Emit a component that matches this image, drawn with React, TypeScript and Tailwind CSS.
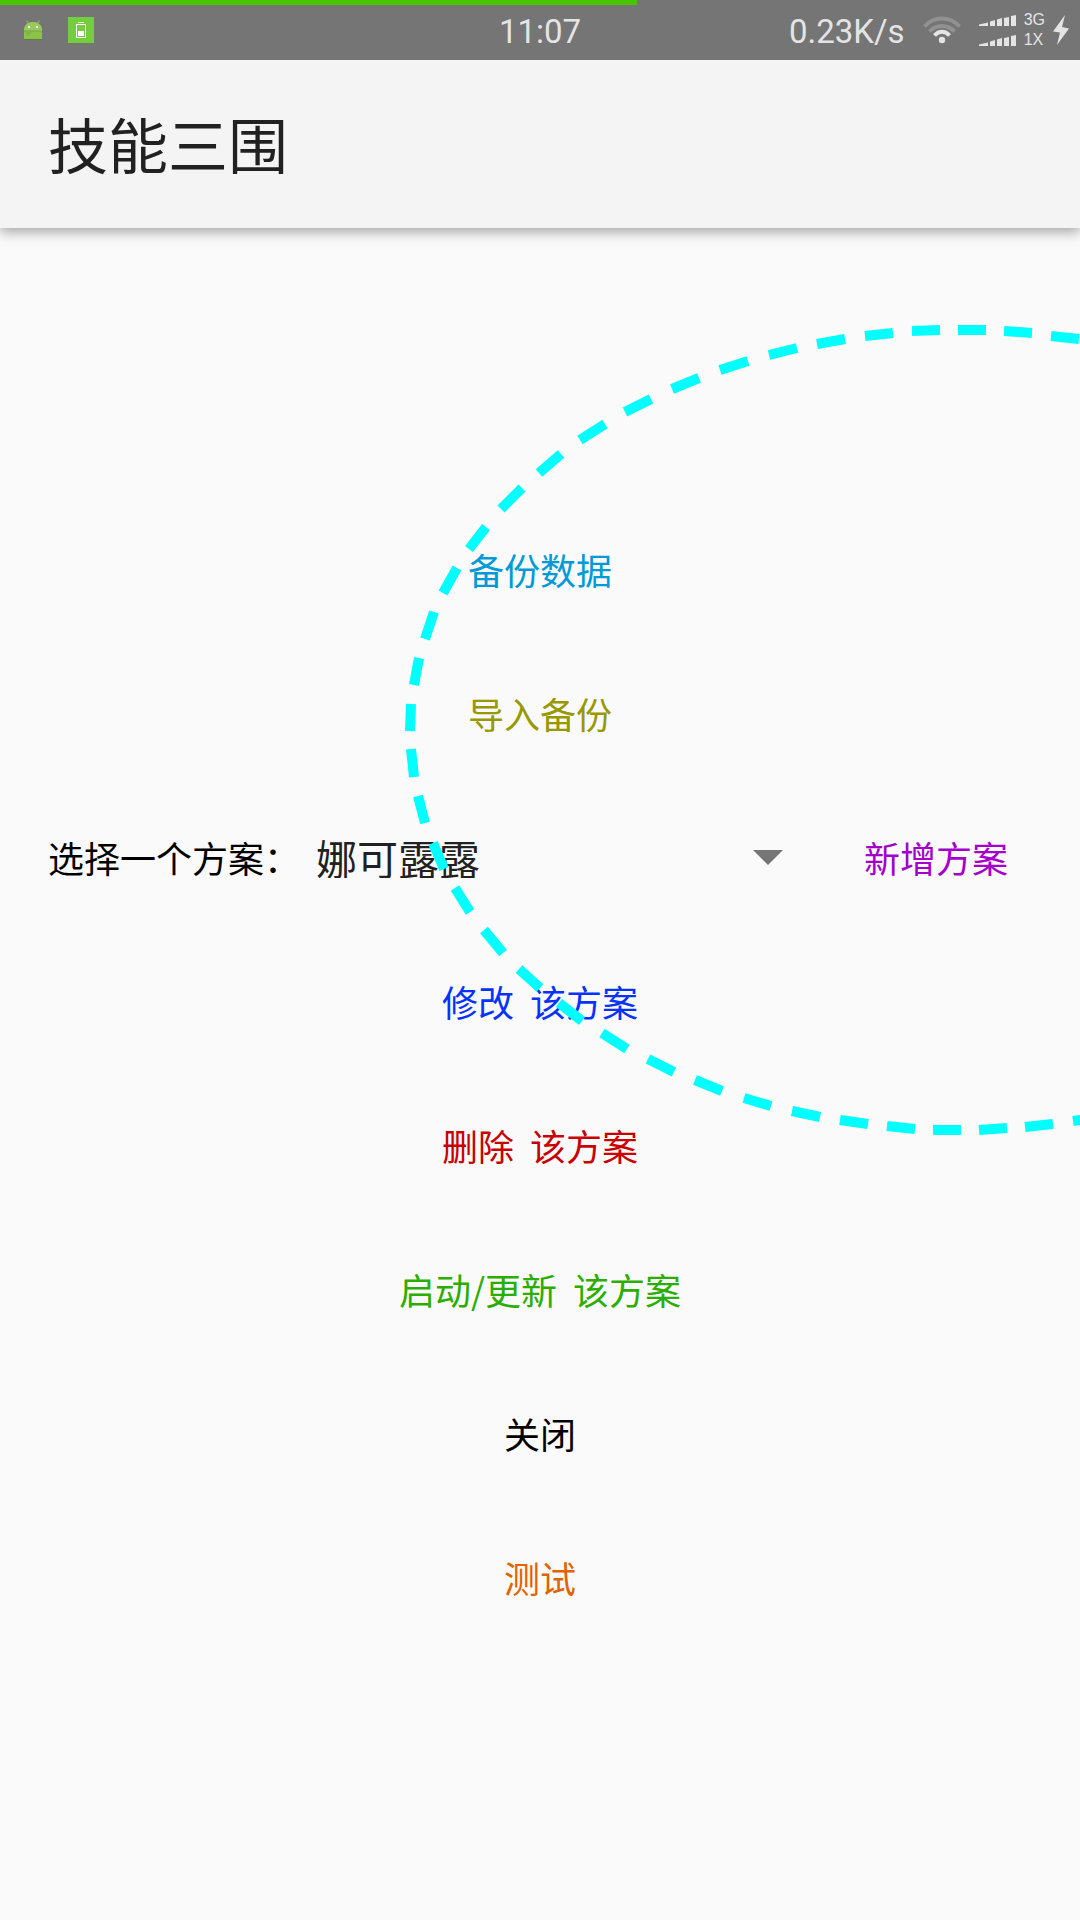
import React from "react";

const UI_FONT = "font-['Noto_Sans_CJK_SC',sans-serif]";

// End points of every visible dash along the cyan ellipse: x1, y1, x2, y2.
const DASHES: number[][] = [
  [1051, 336, 1079, 339],
  [1004, 331, 1032, 333],
  [958, 330, 986, 330],
  [912, 331, 940, 330],
  [865, 336, 893, 333],
  [817, 344, 845, 339],
  [769, 355, 797, 348],
  [720, 370, 748, 361],
  [672, 389, 699, 378],
  [625, 412, 651, 399],
  [580, 440, 605, 424],
  [539, 473, 561, 454],
  [501, 509, 522, 488],
  [469, 549, 486, 527],
  [443, 593, 457, 568],
  [425, 639, 434, 612],
  [414, 685, 419, 658],
  [410, 731, 411, 704],
  [411, 749, 414, 777],
  [418, 796, 425, 823],
  [433, 843, 444, 869],
  [455, 888, 470, 912],
  [484, 930, 503, 953],
  [519, 969, 540, 988],
  [559, 1003, 582, 1021],
  [602, 1033, 627, 1049],
  [648, 1059, 674, 1072],
  [695, 1080, 722, 1091],
  [744, 1098, 771, 1106],
  [792, 1111, 820, 1117],
  [840, 1120, 868, 1124],
  [887, 1126, 915, 1129],
  [933, 1130, 961, 1130],
  [979, 1130, 1007, 1128],
  [1025, 1127, 1053, 1124],
  [1073, 1121, 1101, 1117],
];

function DashedEllipse() {
  return (
    <svg
      className="pointer-events-none absolute left-[400px] top-[320px] h-[820px] w-[calc(100%-400px)]"
      viewBox="400 320 680 820"
      preserveAspectRatio="xMinYMin slice"
      stroke="#00ffff"
      strokeWidth="10"
      aria-hidden="true"
    >
      {DASHES.map(([x1, y1, x2, y2]) => (
        <line key={`${x1}-${y1}`} x1={x1} y1={y1} x2={x2} y2={y2} />
      ))}
    </svg>
  );
}

function AndroidIcon() {
  return (
    <svg width="18" height="20" viewBox="0 0 18 20" aria-hidden="true">
      <path d="M2.5 .5 5 4M15.5 .5 13 4" stroke="#8bc34a" strokeWidth="1.2" />
      <path d="M0 11V8.500C1 4.500 4 2 9 2s8 2.500 9 6.500V11z" fill="#97c95c" />
      <rect y="11" width="18" height="8" fill="#8bc34a" />
      <rect y="10.500" width="18" height="1" fill="#78a84a" />
      <rect y="19" width="18" height="1" fill="#66793f" />
      <path d="M1 12h7l-4 4z" fill="#7fb344" />
      <rect x="4" y="6" width="2" height="2" fill="#f1f8e9" />
      <rect x="12" y="6" width="2" height="2" fill="#f1f8e9" />
    </svg>
  );
}

function BatteryIcon() {
  return (
    <svg width="26" height="26" viewBox="0 0 26 26" aria-hidden="true">
      <rect width="26" height="26" fill="#73cd3f" />
      <rect x="10" y="5" width="6" height="1" fill="#fff" />
      <rect x="8.500" y="7.500" width="9" height="13" fill="none" stroke="#fff" />
      <rect x="10" y="14" width="6" height="5" fill="#fff" />
    </svg>
  );
}

function WifiIcon() {
  return (
    <svg width="38" height="28" viewBox="0 0 38 28" fill="none" strokeWidth="4" aria-hidden="true">
      <path d="M1.500 10.500C11 -.2 27 -.2 36.500 10.500" stroke="#919191" />
      <path d="M6.500 15.500C13.500 8 24.500 8 31.500 15.500" stroke="#919191" />
      <path d="M11.500 19.500C16 14.500 22 14.500 26.500 19.500" stroke="#e4e4e4" />
      <circle cx="19" cy="24" r="3.200" fill="#e4e4e4" />
    </svg>
  );
}

function SignalBars() {
  return (
    <svg width="37" height="11" viewBox="0 0 37 11" fill="#e4e4e4" aria-hidden="true">
      <path d="M0 9.500 9 7.500V11H0zM11 6.500 16 5V11H11zM18 4.500 23 3V11H18zM25 3 30 2V11H25zM32 1 37 0V11H32z" />
    </svg>
  );
}

function BoltIcon() {
  return (
    <svg width="16" height="30" viewBox="0 0 16 30" fill="#e4e4e4" aria-hidden="true">
      <path d="M12 0 0 16.500 7 17.500 4 30 16 13.500 9 12z" />
    </svg>
  );
}

function StatusBar() {
  return (
    <div className="relative grid h-[60px] grid-cols-[1fr_auto_1fr] items-center bg-[#757575] font-[Roboto,sans-serif] text-[33px] leading-none text-[#e4e4e4]">
      <div className="absolute left-0 top-0 h-[5px] w-[59%] bg-[#48c400]" />
      <div className="flex items-center gap-[26px] pl-6">
        <AndroidIcon />
        <BatteryIcon />
      </div>
      <time className="pt-0.5">11:07</time>
      <div className="flex items-center justify-end pr-[11px]">
        <span className="pt-0.5">0.23K/s</span>
        <span className="ml-[18px]">
          <WifiIcon />
        </span>
        <div className="ml-[18px] grid grid-cols-[37px_auto] items-center gap-x-2 font-['Liberation_Sans',sans-serif] text-[16px] leading-5">
          <SignalBars />
          <span>3G</span>
          <SignalBars />
          <span>1X</span>
        </div>
        <span className="ml-2">
          <BoltIcon />
        </span>
      </div>
    </div>
  );
}

function TextButton({ color, children }: { color: string; children: React.ReactNode }) {
  return (
    <button type="button" className={`h-36 self-center whitespace-pre px-6 ${color}`}>
      {children}
    </button>
  );
}

export default function App() {
  return (
    <div
      className={`relative flex min-h-screen flex-col overflow-hidden bg-[#fafafa] text-[36px] leading-none text-black ${UI_FONT}`}
      lang="zh-CN"
    >
      <StatusBar />
      <header className="flex h-[168px] items-center bg-[#f4f4f4] px-12 shadow-[0_4px_12px_rgba(0,0,0,0.35)]">
        <h1 className="pb-0.5 text-[60px] text-[#212121]">技能三围</h1>
      </header>
      <main className="flex flex-1 flex-col pt-[269px]">
        <TextButton color="text-[#009ad6]">备份数据</TextButton>
        <TextButton color="text-[#989800]">导入备份</TextButton>
        <div className="flex h-36 items-center px-12">
          <label htmlFor="plan">选择一个方案：</label>
          <div className="relative flex flex-1 items-center">
            <select
              id="plan"
              className="h-36 w-full appearance-none bg-transparent pl-4 text-[41px] text-[#212121]"
            >
              <option>娜可露露</option>
            </select>
            <svg
              className="pointer-events-none absolute right-[57px] h-[15px] w-[30px]"
              viewBox="0 0 30 15"
              fill="#757575"
              aria-hidden="true"
            >
              <path d="M0 0H30L15 15z" />
            </svg>
          </div>
          <TextButton color="text-[#a400cc]">新增方案</TextButton>
        </div>
        <TextButton color="text-[#0433ff]">{"修改  该方案"}</TextButton>
        <TextButton color="text-[#c80000]">{"删除  该方案"}</TextButton>
        <TextButton color="text-[#2bae00]">{"启动/更新  该方案"}</TextButton>
        <TextButton color="text-black">关闭</TextButton>
        <TextButton color="text-[#e06400]">测试</TextButton>
      </main>
      <DashedEllipse />
    </div>
  );
}
